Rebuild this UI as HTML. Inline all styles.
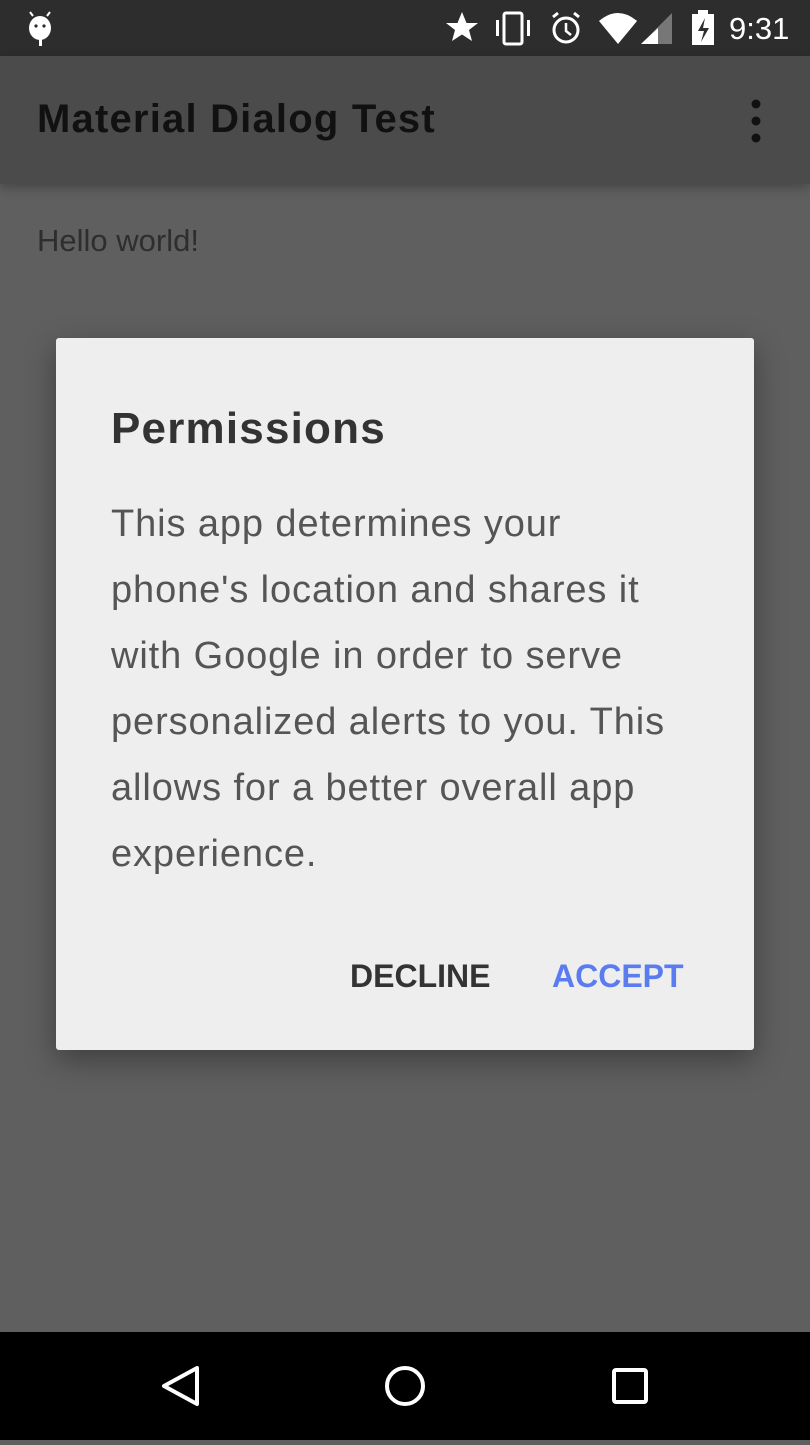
<!DOCTYPE html>
<html><head><meta charset="utf-8"><style>
*{margin:0;padding:0;box-sizing:border-box}
body{width:810px;height:1440px;background:#5f5f5f;position:relative;overflow:hidden;font-family:"Liberation Sans",sans-serif}
.sb{position:absolute;left:0;top:0;width:810px;height:56px;background:#2d2d2d}
.ab{position:absolute;left:0;top:56px;width:810px;height:128px;background:#4b4b4b;box-shadow:0 4px 10px rgba(0,0,0,.25)}
.ab .t{position:absolute;left:37px;top:41px;font-size:40px;color:#111;font-weight:bold;letter-spacing:1.2px}
.hw{position:absolute;left:37px;top:223px;font-size:31px;color:#2e2e2e}
.dlg{position:absolute;left:56px;top:338px;width:698px;height:712px;background:#eeeeee;border-radius:3px;box-shadow:0 10px 30px rgba(0,0,0,.35)}
.dt{position:absolute;left:55px;top:66px;font-size:44px;color:#333;font-weight:bold;letter-spacing:1.2px}
.db{position:absolute;left:55px;top:153px;width:640px;font-size:38px;line-height:66px;color:#555;white-space:nowrap;letter-spacing:0.9px}
.btn{position:absolute;top:620px;font-size:32px;font-weight:bold}
.nav{position:absolute;left:0;top:1332px;width:810px;height:108px;background:#000}
.clk{position:absolute;left:729px;top:11px;color:#fff;font-size:31px}
</style></head><body>
<div class="sb">
<svg width="810" height="56" style="position:absolute;left:0;top:0">
<ellipse cx="40" cy="28" rx="11" ry="12" fill="#fff"/>
<line x1="33" y1="16" x2="30" y2="12" stroke="#fff" stroke-width="2"/><line x1="47" y1="16" x2="50" y2="12" stroke="#fff" stroke-width="2"/>
<circle cx="36" cy="26" r="1.6" fill="#2d2d2d"/><circle cx="44" cy="26" r="1.6" fill="#2d2d2d"/>
<rect x="39" y="38" width="3" height="8" fill="#fff"/>
<polygon points="462,12 466.5,23 478,23 469,30 472,41 462,34.5 452,41 455,30 446,23 457.5,23" fill="#fff"/>
<rect x="504" y="13" width="18" height="31" rx="2" fill="none" stroke="#fff" stroke-width="3"/>
<rect x="496" y="20" width="3" height="16" fill="#fff"/><rect x="527" y="20" width="3" height="16" fill="#fff"/>
<circle cx="566" cy="30" r="12" fill="none" stroke="#fff" stroke-width="3"/>
<path d="M566 23v8l5 4" stroke="#fff" stroke-width="2.5" fill="none"/>
<path d="M553 17l5-4M579 17l-5-4" stroke="#fff" stroke-width="3"/>
<path d="M599 21Q618 5 637 21L618 44Z" fill="#fff"/>
<polygon points="641,44 672,44 672,13" fill="#777"/><polygon points="641,44 658,44 658,28" fill="#fff"/>
<rect x="692" y="14" width="22" height="31" fill="#fff"/><rect x="698" y="10" width="10" height="5" fill="#fff"/>
<path d="M705 18l-7 13h6l-3 11 8-14h-6z" fill="#2d2d2d"/>
</svg>
<div class="clk">9:31</div>
</div>
<div class="ab"><div class="t">Material Dialog Test</div>
<svg width="20" height="50" style="position:absolute;left:746px;top:40px"><circle cx="10" cy="8" r="4.5" fill="#111"/><circle cx="10" cy="25" r="4.5" fill="#111"/><circle cx="10" cy="42" r="4.5" fill="#111"/></svg>
</div>
<div class="hw">Hello world!</div>
<div class="dlg">
<div class="dt">Permissions</div>
<div class="db">This app determines your<br>phone's location and shares it<br>with Google in order to serve<br>personalized alerts to you. This<br>allows for a better overall app<br>experience.</div>
<div class="btn" style="left:294px;color:#333">DECLINE</div>
<div class="btn" style="left:496px;color:#5a7cf0">ACCEPT</div>
</div>
<div class="nav">
<svg width="810" height="108">
<path d="M197 36L164 54L197 72Z" fill="none" stroke="#fff" stroke-width="4" stroke-linejoin="round"/>
<circle cx="405" cy="54" r="18" fill="none" stroke="#fff" stroke-width="4"/>
<rect x="614" y="38" width="32" height="32" rx="2" fill="none" stroke="#fff" stroke-width="4"/>
</svg>
</div>
</body></html>
